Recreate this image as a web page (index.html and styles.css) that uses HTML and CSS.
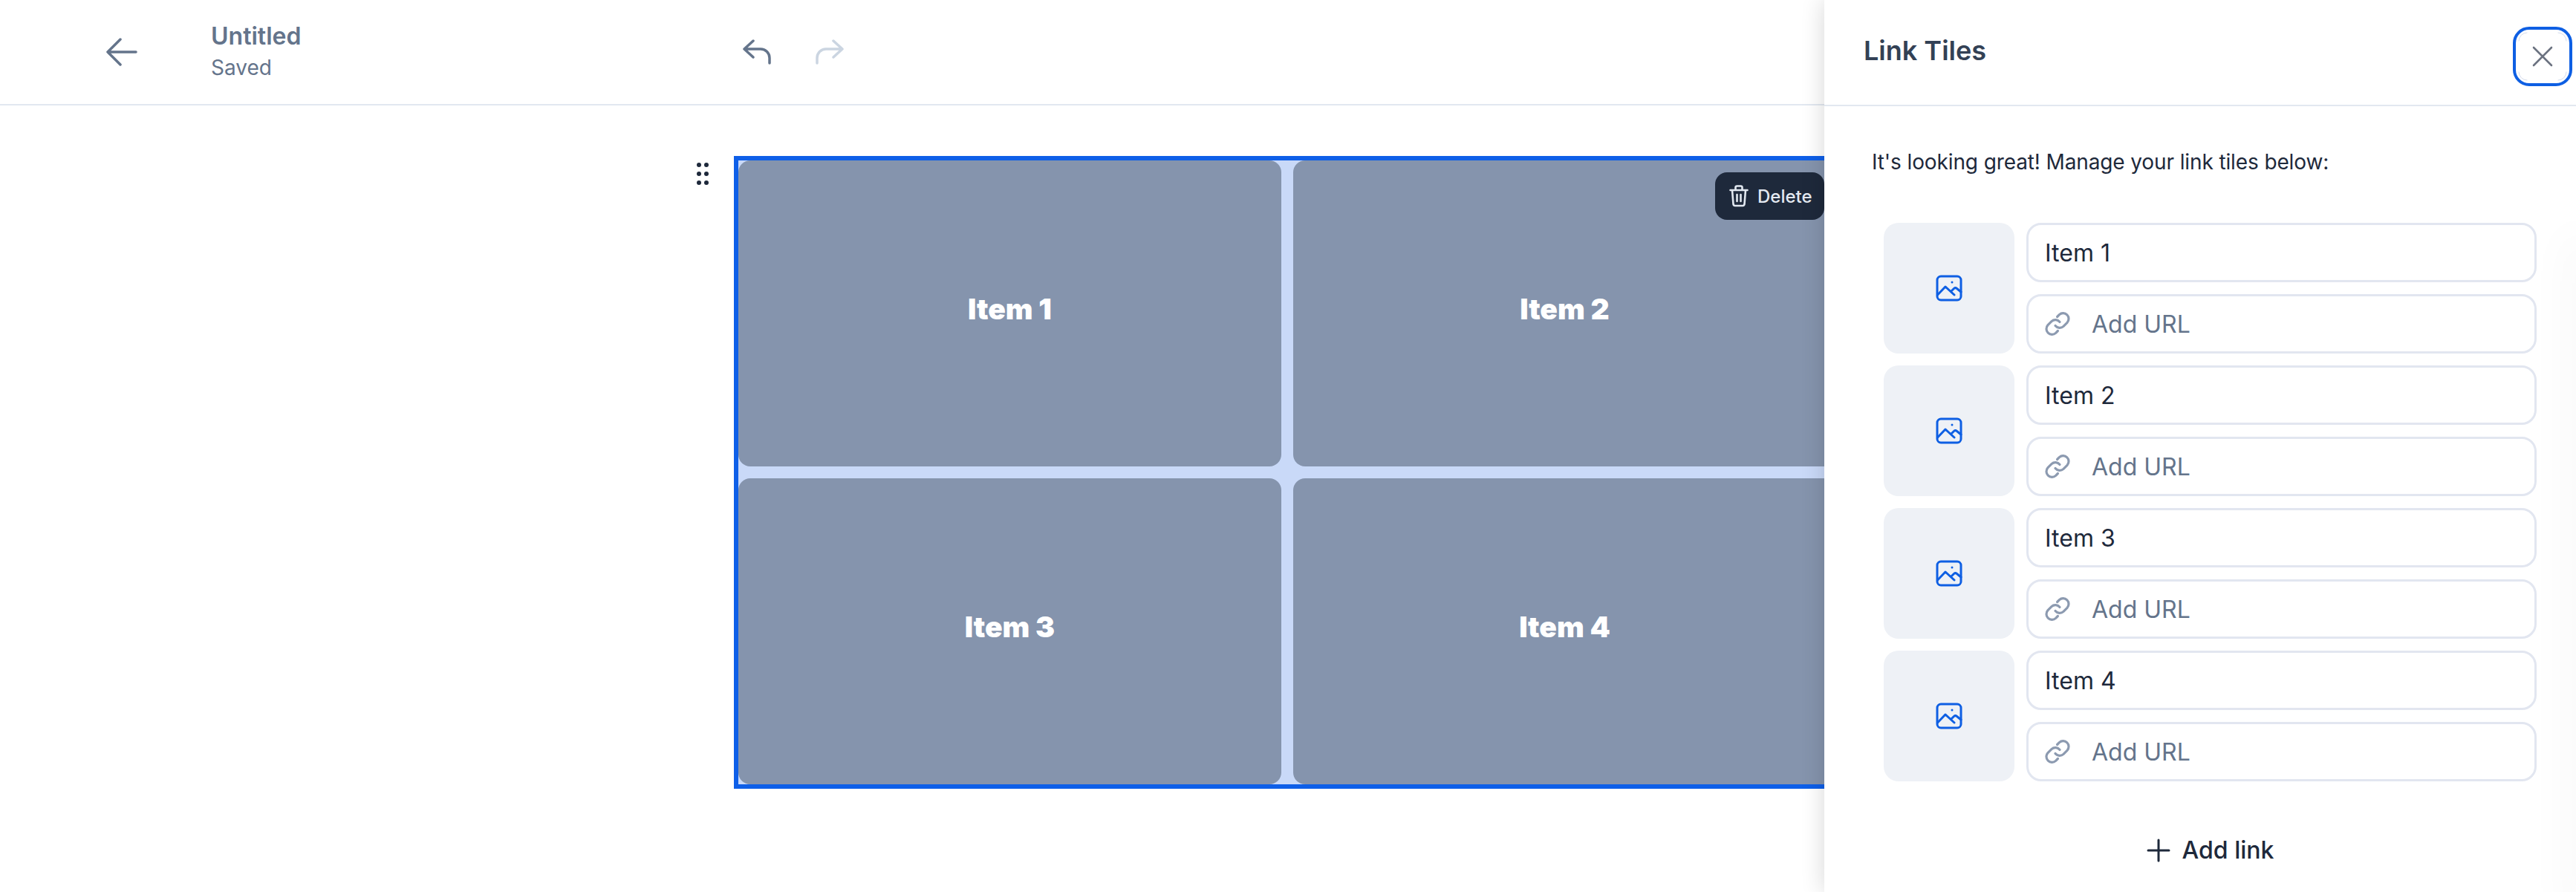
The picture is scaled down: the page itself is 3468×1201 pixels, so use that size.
FILE: index.html
```html
<!DOCTYPE html>
<html lang="en">
<head>
    <meta charset="UTF-8">
    <title>Link Tiles</title>
    <link rel="stylesheet" href="styles.css">
</head>
<body>
    <div class="topbar">
        <a class="back-btn">
            <svg width="42" height="38" viewBox="0 0 42 38" fill="none" stroke="#64748b" stroke-width="3.5" stroke-linecap="round" stroke-linejoin="round"><path d="M40 19H2M19 2 2 19l17 17"/></svg>
        </a>
        <div class="doc-info">
            <div class="doc-title">Untitled</div>
            <div class="doc-status">Saved</div>
        </div>
        <div class="history">
            <svg width="38" height="34" viewBox="0 0 38 34" fill="none" stroke="#64748b" stroke-width="3.5" stroke-linecap="round" stroke-linejoin="round"><path d="M14 2 2 13l12 11M2 13h22a12 12 0 0 1 12 12v7"/></svg>
            <svg width="38" height="34" viewBox="0 0 38 34" fill="none" stroke="#cbd5e1" stroke-width="3.5" stroke-linecap="round" stroke-linejoin="round"><path d="M24 2l12 11-12 11M36 13H14A12 12 0 0 0 2 25v7"/></svg>
        </div>
    </div>

    <div class="canvas">
        <div class="drag-handle">
            <svg width="16" height="30" viewBox="0 0 16 30" fill="#1e293b"><circle cx="3" cy="3" r="3"/><circle cx="13" cy="3" r="3"/><circle cx="3" cy="15" r="3"/><circle cx="13" cy="15" r="3"/><circle cx="3" cy="27" r="3"/><circle cx="13" cy="27" r="3"/></svg>
        </div>
        <div class="tile-block">
            <div class="tile-grid">
                <div class="tile">Item 1</div>
                <div class="tile">Item 2</div>
                <div class="tile">Item 3</div>
                <div class="tile">Item 4</div>
            </div>
            <button class="delete-btn">
                <svg width="26" height="30" viewBox="0 0 26 30" fill="none" stroke="#e2e8f0" stroke-width="2.6" stroke-linecap="round" stroke-linejoin="round"><path d="M1.500 7h23M4 7l1.500 19a2.500 2.500 0 0 0 2.500 2h10a2.500 2.500 0 0 0 2.500-2L22 7M8.500 7V3.500a2 2 0 0 1 2-2h5a2 2 0 0 1 2 2V7M10.500 13v9M15.500 13v9"/></svg>
                Delete
            </button>
        </div>
    </div>

    <aside class="panel">
        <div class="panel-header">
            <div class="panel-title">Link Tiles</div>
            <button class="close-btn">
                <svg width="72" height="72" viewBox="0 0 72 72" fill="none" stroke-linecap="round">
                    <path stroke="#d5dcec" d="M4 15A11 11 0 0 1 15 4M57 4A11 11 0 0 1 68 15M68 57A11 11 0 0 1 57 68M15 68A11 11 0 0 1 4 57"/>
                    <path stroke="#6b7280" stroke-width="2.6" d="M24 24l24 24M48 24 24 48"/>
                </svg>
            </button>
        </div>
        <div class="panel-body">
            <p class="panel-intro">It's looking great! Manage your link tiles below:</p>
            <div class="link-list">
                <div class="link-row">
                    <div class="image-pick">
                        <svg class="image-icon" width="36" height="36" viewBox="0 0 36 36" fill="none" stroke="#0e5fe3" stroke-width="3" stroke-linecap="round" stroke-linejoin="round"><rect x="2" y="2" width="32" height="32" rx="5"/><path d="M2.500 27 13 16l12 11M21 22l3.500-3.500a3 3 0 0 1 4 0L34 23"/><path d="M22 10h.01"/></svg>
                    </div>
                    <div class="link-fields">
                        <div class="field">Item 1</div>
                        <div class="field field-url">
                            <svg width="34" height="34" viewBox="0 0 34 34" fill="none" stroke="#8c9ab0" stroke-width="3.2" stroke-linecap="round" stroke-linejoin="round"><path d="M14 19.500a7.500 7.500 0 0 0 11 .8l5-5a7.500 7.500 0 0 0-10.600-10.600l-2.800 2.800"/><path d="M20 14.500a7.500 7.500 0 0 0-11-.8l-5 5a7.500 7.500 0 0 0 10.600 10.600l2.800-2.800"/></svg>
                            <span>Add URL</span>
                        </div>
                    </div>
                </div>
                <div class="link-row">
                    <div class="image-pick">
                        <svg class="image-icon" width="36" height="36" viewBox="0 0 36 36" fill="none" stroke="#0e5fe3" stroke-width="3" stroke-linecap="round" stroke-linejoin="round"><rect x="2" y="2" width="32" height="32" rx="5"/><path d="M2.500 27 13 16l12 11M21 22l3.500-3.500a3 3 0 0 1 4 0L34 23"/><path d="M22 10h.01"/></svg>
                    </div>
                    <div class="link-fields">
                        <div class="field">Item 2</div>
                        <div class="field field-url">
                            <svg width="34" height="34" viewBox="0 0 34 34" fill="none" stroke="#8c9ab0" stroke-width="3.2" stroke-linecap="round" stroke-linejoin="round"><path d="M14 19.500a7.500 7.500 0 0 0 11 .8l5-5a7.500 7.500 0 0 0-10.600-10.600l-2.800 2.800"/><path d="M20 14.500a7.500 7.500 0 0 0-11-.8l-5 5a7.500 7.500 0 0 0 10.600 10.600l2.800-2.800"/></svg>
                            <span>Add URL</span>
                        </div>
                    </div>
                </div>
                <div class="link-row">
                    <div class="image-pick">
                        <svg class="image-icon" width="36" height="36" viewBox="0 0 36 36" fill="none" stroke="#0e5fe3" stroke-width="3" stroke-linecap="round" stroke-linejoin="round"><rect x="2" y="2" width="32" height="32" rx="5"/><path d="M2.500 27 13 16l12 11M21 22l3.500-3.500a3 3 0 0 1 4 0L34 23"/><path d="M22 10h.01"/></svg>
                    </div>
                    <div class="link-fields">
                        <div class="field">Item 3</div>
                        <div class="field field-url">
                            <svg width="34" height="34" viewBox="0 0 34 34" fill="none" stroke="#8c9ab0" stroke-width="3.2" stroke-linecap="round" stroke-linejoin="round"><path d="M14 19.500a7.500 7.500 0 0 0 11 .8l5-5a7.500 7.500 0 0 0-10.600-10.600l-2.800 2.800"/><path d="M20 14.500a7.500 7.500 0 0 0-11-.8l-5 5a7.500 7.500 0 0 0 10.600 10.600l2.800-2.800"/></svg>
                            <span>Add URL</span>
                        </div>
                    </div>
                </div>
                <div class="link-row">
                    <div class="image-pick">
                        <svg class="image-icon" width="36" height="36" viewBox="0 0 36 36" fill="none" stroke="#0e5fe3" stroke-width="3" stroke-linecap="round" stroke-linejoin="round"><rect x="2" y="2" width="32" height="32" rx="5"/><path d="M2.500 27 13 16l12 11M21 22l3.500-3.500a3 3 0 0 1 4 0L34 23"/><path d="M22 10h.01"/></svg>
                    </div>
                    <div class="link-fields">
                        <div class="field">Item 4</div>
                        <div class="field field-url">
                            <svg width="34" height="34" viewBox="0 0 34 34" fill="none" stroke="#8c9ab0" stroke-width="3.2" stroke-linecap="round" stroke-linejoin="round"><path d="M14 19.500a7.500 7.500 0 0 0 11 .8l5-5a7.500 7.500 0 0 0-10.600-10.600l-2.800 2.800"/><path d="M20 14.500a7.500 7.500 0 0 0-11-.8l-5 5a7.500 7.500 0 0 0 10.600 10.600l2.800-2.800"/></svg>
                            <span>Add URL</span>
                        </div>
                    </div>
                </div>
            </div>
            <button class="add-link">
                <svg width="32" height="32" viewBox="0 0 32 32" fill="none" stroke="#1e293b" stroke-width="3" stroke-linecap="round"><path d="M16 2v28M2 16h28"/></svg>
                Add link
            </button>
        </div>
    </aside>
</body>
</html>
```

FILE: styles.css
```css
html, body {
    height: 100%;
}

body {
    font-family: Inter, 'Liberation Sans', sans-serif;
    margin: 0;
    background-color: #ffffff;
    color: #1e293b;
    overflow: hidden;
    position: relative;
}

button {
    font-family: inherit;
    border: none;
    background: none;
    padding: 0;
}

.topbar {
    height: 140px;
    display: flex;
    align-items: center;
    border-bottom: 2px solid #e2e8f0;
    padding-left: 143px;
}

.back-btn {
    display: flex;
    width: 141px;
}

.doc-info {
    width: 716px;
    padding-bottom: 2px;
}

.doc-title {
    font-size: 32px;
    font-weight: 600;
    line-height: 40px;
    color: #64748b;
}

.doc-status {
    font-size: 28px;
    line-height: 36px;
    margin-top: 4px;
    color: #64748b;
}

.history {
    display: flex;
    gap: 60px;
}

.canvas {
    display: flex;
    padding: 68px 0 0 938px;
}

.drag-handle {
    width: 50px;
    padding-top: 9px;
}

.tile-block {
    position: relative;
    flex: none;
    border: 6px solid #0e5fe8;
}

.tile-grid {
    display: grid;
    grid-template-columns: 731px 731px;
    grid-template-rows: 412px 412px;
    gap: 16px;
    background-color: #c9d9f8;
}

.tile {
    display: flex;
    align-items: center;
    justify-content: center;
    padding-bottom: 14px;
    box-sizing: border-box;
    background-color: #8594ad;
    border-radius: 16px;
    color: #ffffff;
    font-size: 39px;
    font-weight: 900;
}

.delete-btn {
    position: absolute;
    top: 16px;
    right: 16px;
    width: 147px;
    height: 64px;
    display: flex;
    align-items: center;
    gap: 12px;
    padding-left: 19px;
    box-sizing: border-box;
    background-color: #1e293b;
    border-radius: 16px;
    color: #e2e8f0;
    font-size: 24px;
    font-weight: 500;
}

.panel {
    position: absolute;
    top: 0;
    right: 0;
    bottom: 0;
    width: 1012px;
    background-color: #ffffff;
    box-shadow: 0 0 30px rgba(0, 0, 0, 0.16);
}

/* soft shadow coming in from off the right edge */
.panel::after {
    content: "";
    position: absolute;
    top: 320px;
    bottom: -40px;
    right: -12px;
    width: 12px;
    box-shadow: 0 0 60px rgba(0, 0, 0, 0.1);
}

.panel-header {
    height: 141px;
    display: flex;
    align-items: center;
    justify-content: space-between;
    border-bottom: 2px solid #e2e8f0;
    padding: 0 5px 0 53px;
}

.panel-title {
    font-size: 36px;
    font-weight: 600;
    color: #334155;
    margin-top: -5px;
}

.close-btn {
    width: 80px;
    height: 80px;
    margin-top: 11px;
    box-sizing: border-box;
    display: flex;
    align-items: center;
    justify-content: center;
    border: 4px solid #0e5fe3;
    border-radius: 22px;
}

.panel-body {
    padding: 0 53px 0 80px;
}

.panel-intro {
    margin: 57px 0 0 -16px;
    font-size: 28px;
    line-height: 36px;
    letter-spacing: -0.12px;
    color: #1e293b;
}

.link-list {
    margin-top: 64px;
    display: flex;
    flex-direction: column;
    gap: 16px;
}

.link-row {
    display: flex;
    gap: 16px;
}

.image-pick {
    width: 176px;
    height: 176px;
    flex: none;
    display: flex;
    align-items: center;
    justify-content: center;
    background-color: #eef1f6;
    border-radius: 20px;
}

.link-fields {
    flex: 1;
    display: flex;
    flex-direction: column;
    gap: 16px;
}

.field {
    height: 80px;
    box-sizing: border-box;
    display: flex;
    align-items: center;
    padding-left: 22px;
    border: 3px solid #e2e6f0;
    border-radius: 20px;
    font-size: 32px;
    color: #1e293b;
}

.field-url {
    gap: 29px;
    color: #64748b;
}

.add-link {
    width: 100%;
    margin-top: 73px;
    display: flex;
    align-items: center;
    justify-content: center;
    gap: 16px;
    font-size: 32px;
    font-weight: 500;
    color: #1e293b;
}
```
